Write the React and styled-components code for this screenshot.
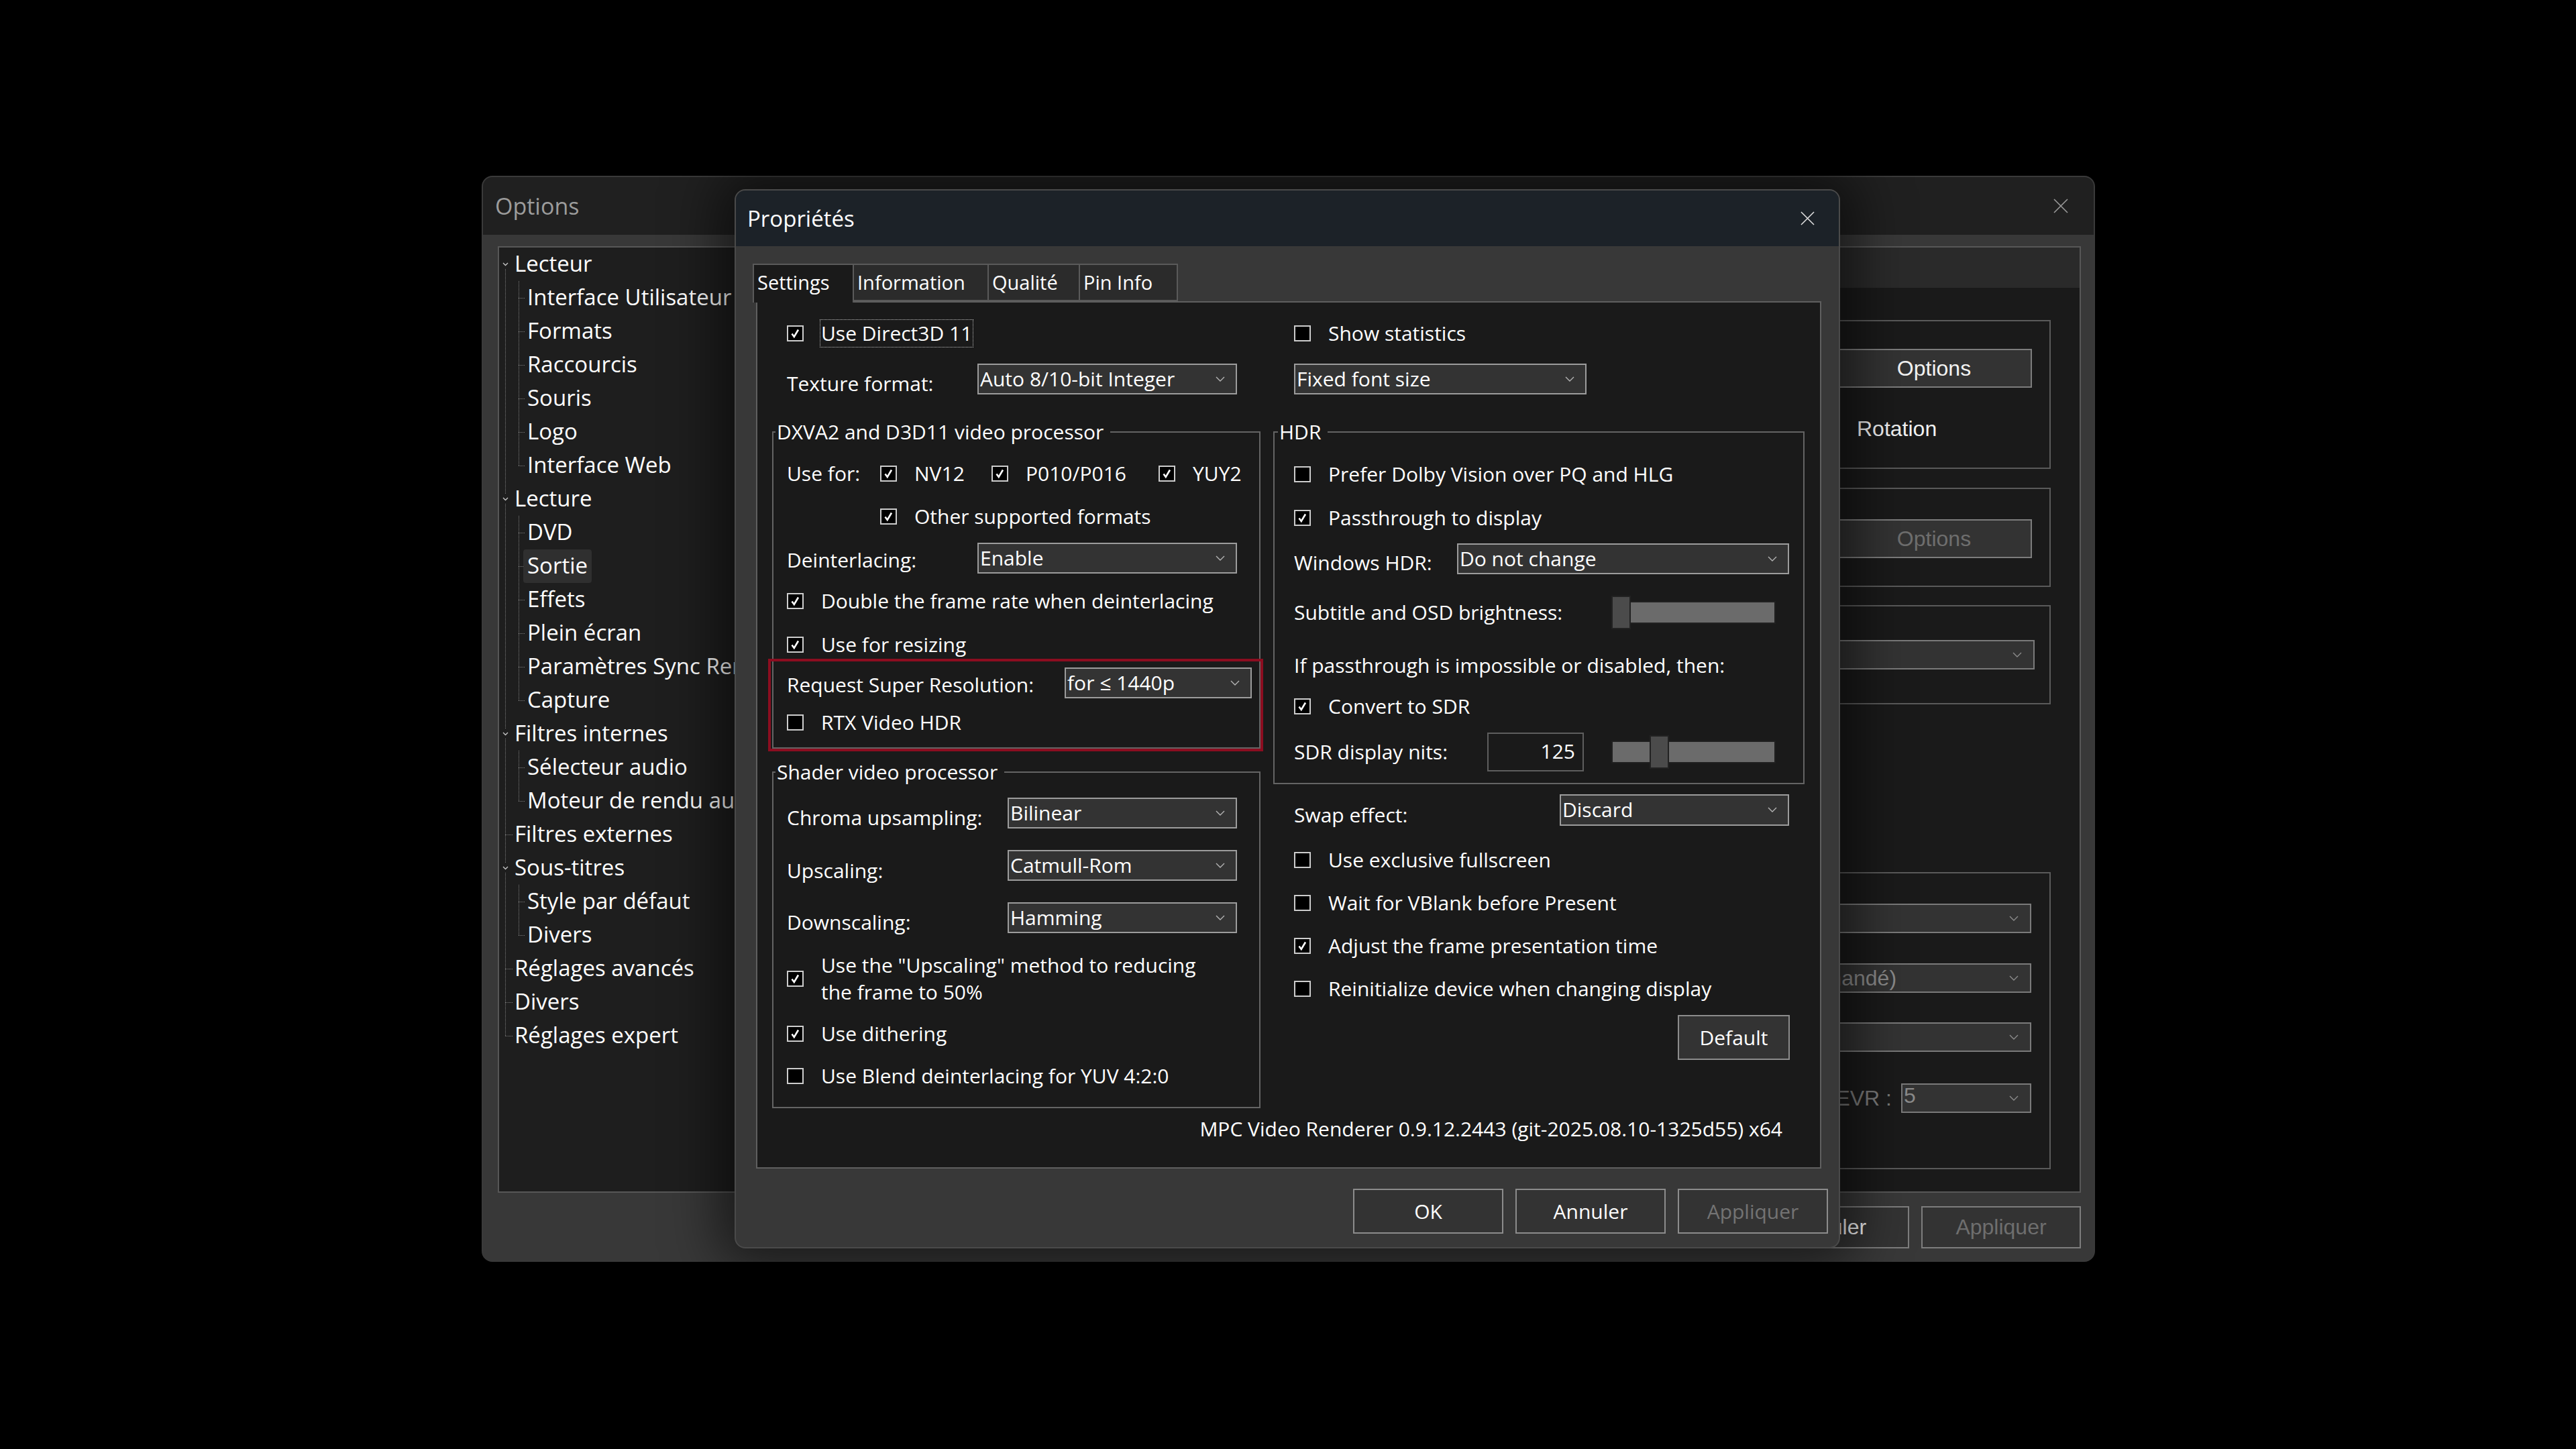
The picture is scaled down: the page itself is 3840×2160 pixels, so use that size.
import React from "react";
import styled, { createGlobalStyle } from "styled-components";

const GlobalStyle = createGlobalStyle`
  html, body {
    margin: 0;
    padding: 0;
    background: #000;
  }
  body {
    font-family: "Open Sans", "Noto Sans", sans-serif;
    color: #fff;
  }
  * {
    box-sizing: border-box;
  }
`;

const Desktop = styled.div`
  position: relative;
  width: 3840px;
  height: 2160px;
  overflow: hidden;
  background: #000;
`;

/* ---------- icons ---------- */

const Chevron = ({ color = "#b4b4b4" }) => (
  <svg width="14" height="8" viewBox="0 0 14 8">
    <path d="M1 1 L7 7 L13 1" fill="none" stroke={color} strokeWidth="1.4" />
  </svg>
);

const CloseIcon = ({ color, size = 22 }) => (
  <svg width={size} height={size} viewBox="0 0 22 22">
    <path d="M1 1 L21 21 M21 1 L1 21" stroke={color} strokeWidth="1.6" fill="none" />
  </svg>
);

const TickIcon = () => (
  <svg width="17" height="16" viewBox="0 0 17 16">
    <path d="M3.5 8.5 L6.8 13 L13 2.5" fill="none" stroke="#fff" strokeWidth="2.6" />
  </svg>
);

/* ---------- back "Options" window ---------- */

const OptionsWindow = styled.div`
  position: absolute;
  left: 718px;
  top: 262px;
  width: 2405px;
  height: 1619px;
  border: 2px solid #3a3a3a;
  border-radius: 16px;
  background: #383838;
  overflow: hidden;
  display: flex;
  flex-direction: column;
`;

const OptionsTitleBar = styled.div`
  flex: none;
  height: 86px;
  background: #202020;
  display: flex;
  align-items: center;
  justify-content: space-between;
  padding: 0 38px 0 18px;
  font-size: 34px;
  color: #9c9c9c;
`;

const OptionsBody = styled.div`
  flex: 1;
  display: flex;
  flex-direction: column;
  padding: 17px 19px 18px 22px;
`;

const MainRow = styled.div`
  display: flex;
  gap: 18px;
  height: 1411px;
  flex: none;
`;

const Tree = styled.div`
  width: 480px;
  flex: none;
  background: #1e1e1e;
  border: 2px solid #575757;
  overflow: hidden;
  font-size: 33px;
`;

const TreeRow = styled.div`
  display: flex;
  align-items: center;
  height: 50px;
  white-space: nowrap;
`;

const dotV = "repeating-linear-gradient(to bottom, #7c7c7c 0 1px, transparent 1px 2px)";
const dotH = "repeating-linear-gradient(to right, #7c7c7c 0 1px, transparent 1px 2px)";

const lineLayers = (kind, stub, w) => {
  const x = 9;
  const layers = [];
  if (kind === "full") layers.push(`${dotV} ${x}px 0 / 1px 100% no-repeat`);
  if (kind === "top") layers.push(`${dotV} ${x}px 0 / 1px 25px no-repeat`);
  if (kind === "bottom") layers.push(`${dotV} ${x}px 32px / 1px 18px no-repeat`);
  if (kind === "split") {
    layers.push(`${dotV} ${x}px 0 / 1px 18px no-repeat`);
    layers.push(`${dotV} ${x}px 32px / 1px 18px no-repeat`);
  }
  if (stub) layers.push(`${dotH} ${x}px 25px / ${w - x}px 1px no-repeat`);
  return layers.length ? layers.join(", ") : "none";
};

const TreeCell = styled.span`
  flex: none;
  width: ${({ $w }) => $w}px;
  height: 50px;
  display: flex;
  align-items: center;
  background: ${({ $kind, $stub, $w }) => lineLayers($kind, $stub, $w)};

  svg {
    margin-left: 5px;
  }
`;

const TreeLabel = styled.span`
  margin-left: -3px;
  padding: 0 6px;
  height: 50px;
  line-height: 48px;
  border-radius: 4px;
  color: #fff;
  background: ${({ $selected }) => ($selected ? "#2f2f2f" : "transparent")};
`;

const treeItems = [
  { label: "Lecteur", level: 0, open: true, first: true },
  { label: "Interface Utilisateur", level: 1 },
  { label: "Formats", level: 1 },
  { label: "Raccourcis", level: 1 },
  { label: "Souris", level: 1 },
  { label: "Logo", level: 1 },
  { label: "Interface Web", level: 1, last: true },
  { label: "Lecture", level: 0, open: true },
  { label: "DVD", level: 1 },
  { label: "Sortie", level: 1, selected: true },
  { label: "Effets", level: 1 },
  { label: "Plein écran", level: 1 },
  { label: "Paramètres Sync Renderer", level: 1 },
  { label: "Capture", level: 1, last: true },
  { label: "Filtres internes", level: 0, open: true },
  { label: "Sélecteur audio", level: 1 },
  { label: "Moteur de rendu audio", level: 1, last: true },
  { label: "Filtres externes", level: 0 },
  { label: "Sous-titres", level: 0, open: true },
  { label: "Style par défaut", level: 1 },
  { label: "Divers", level: 1, last: true },
  { label: "Réglages avancés", level: 0 },
  { label: "Divers", level: 0 },
  { label: "Réglages expert", level: 0, last: true },
];

const TreeChevron = () => (
  <svg width="9" height="6" viewBox="0 0 9 6">
    <path d="M1 1 L4.5 4.5 L8 1" fill="none" stroke="#c8c8c8" strokeWidth="1.3" />
  </svg>
);

function TreeItem({ item }) {
  let rootKind = "full";
  if (item.level === 0) {
    if (item.first) rootKind = "bottom";
    else if (item.open) rootKind = "split";
    else if (item.last) rootKind = "top";
  }
  return (
    <TreeRow>
      <TreeCell $w={20} $kind={rootKind} $stub={item.level === 0 && !item.open}>
        {item.open && <TreeChevron />}
      </TreeCell>
      {item.level === 1 && <TreeCell $w={19} $kind={item.last ? "top" : "full"} $stub />}
      <TreeLabel $selected={item.selected}>{item.label}</TreeLabel>
    </TreeRow>
  );
}

const Page = styled.div`
  flex: 1;
  background: #1a1a1a;
  border: 2px solid #575757;
  display: flex;
  flex-direction: column;
  font-family: "Liberation Sans", Arial, sans-serif;
  font-size: 32px;
`;

const PageHeader = styled.div`
  height: 60px;
  flex: none;
  background: #2a2a2a;
`;

const PageBody = styled.div`
  display: flex;
  flex-direction: column;
  padding: 0 43px 0 30px;
`;

const PageGroup = styled.div`
  flex: none;
  margin-top: ${({ $mt }) => $mt}px;
  height: ${({ $h }) => $h}px;
  border: 2px solid #5a5a5a;
  display: flex;
  flex-direction: column;
  align-items: flex-end;
  padding: ${({ $pt }) => $pt}px ${({ $pr }) => $pr}px 0 0;
`;

const BackButton = styled.div`
  flex: none;
  width: ${({ $w }) => $w}px;
  height: ${({ $h }) => $h || 58}px;
  background: #333333;
  border: 2px solid #7d7d7d;
  display: flex;
  align-items: center;
  justify-content: center;
  font-family: "Liberation Sans", Arial, sans-serif;
  font-size: 32px;
  color: ${({ $disabled }) => ($disabled ? "#6e6e6e" : "#f2f2f2")};
`;

const PlainText = styled.div`
  width: ${({ $w }) => $w}px;
  margin-top: ${({ $mt }) => $mt || 0}px;
  line-height: 56px;
  color: #f2f2f2;
  white-space: nowrap;
`;

const BackComboBox = styled.div`
  flex: none;
  width: ${({ $w }) => $w}px;
  height: 44px;
  margin-top: ${({ $mt }) => $mt || 0}px;
  background: #333333;
  border: 2px solid #7a7a7a;
  display: flex;
  align-items: center;
  justify-content: space-between;
  padding: 0 17px 0 2px;
  color: #8a8a8a;
  white-space: nowrap;
`;

const BackComboText = styled.span`
  margin-left: ${({ $indent }) => $indent || 0}px;
  margin-top: ${({ $raise }) => ($raise ? -8 : 0)}px;
`;

const BackCombo = ({ w, mt, indent, raise, children }) => (
  <BackComboBox $w={w} $mt={mt}>
    <BackComboText $indent={indent} $raise={raise}>{children}</BackComboText>
    <Chevron color="#8c8c8c" />
  </BackComboBox>
);

const BackFieldRow = styled.div`
  display: flex;
  align-items: center;
  gap: 14px;
  margin-top: ${({ $mt }) => $mt}px;
  color: #7a7a7a;
  white-space: nowrap;
`;

const BackButtonRow = styled.div`
  display: flex;
  justify-content: flex-end;
  gap: 18px;
  margin-top: 20px;
`;

function OptionsBack() {
  return (
    <OptionsWindow>
      <OptionsTitleBar>
        <span>Options</span>
        <CloseIcon color="#9a9a9a" />
      </OptionsTitleBar>
      <OptionsBody>
        <MainRow>
          <Tree>
            {treeItems.map((item, i) => (
              <TreeItem key={i} item={item} />
            ))}
          </Tree>
          <Page>
            <PageHeader />
            <PageBody>
              <PageGroup $mt={48} $h={222} $pt={41} $pr={26}>
                <BackButton $w={292}>Options</BackButton>
                <PlainText $w={261} $mt={33}>Rotation</PlainText>
              </PageGroup>
              <PageGroup $mt={28} $h={148} $pt={45} $pr={26}>
                <BackButton $w={292} $disabled>Options</BackButton>
              </PageGroup>
              <PageGroup $mt={27} $h={148} $pt={50} $pr={22}>
                <BackCombo w={600} />
              </PageGroup>
              <PageGroup $mt={250} $h={443} $pt={45} $pr={27}>
                <BackCombo w={580} />
                <BackCombo w={580} mt={45} indent={167}>(recommandé)</BackCombo>
                <BackCombo w={580} mt={44} />
                <BackFieldRow $mt={47}>
                  <span>EVR :</span>
                  <BackCombo w={194} raise>5</BackCombo>
                </BackFieldRow>
              </PageGroup>
            </PageBody>
          </Page>
        </MainRow>
        <BackButtonRow>
          <BackButton $w={238} $h={63}>OK</BackButton>
          <BackButton $w={238} $h={63}>Annuler</BackButton>
          <BackButton $w={238} $h={63} $disabled>Appliquer</BackButton>
        </BackButtonRow>
      </OptionsBody>
    </OptionsWindow>
  );
}

/* ---------- "Propriétés" dialog ---------- */

const Dialog = styled.div`
  position: absolute;
  left: 1095px;
  top: 282px;
  width: 1648px;
  height: 1579px;
  border: 2px solid #4a4a4a;
  border-radius: 16px;
  background: #383838;
  overflow: hidden;
  display: flex;
  flex-direction: column;
  box-shadow: 0 0 80px 24px rgba(0, 0, 0, 0.55);
  color: #fff;
`;

const DialogTitleBar = styled.div`
  flex: none;
  height: 83px;
  background: #1c2228;
  display: flex;
  align-items: center;
  justify-content: space-between;
  padding: 0 36px 0 17px;
  font-size: 33px;
`;

const DialogBody = styled.div`
  flex: 1;
  display: flex;
  flex-direction: column;
  padding: 25px 26px 20px 30px;
`;

const TabStrip = styled.div`
  display: flex;
  align-items: flex-end;
  height: 57px;
  margin-left: -5px;
  flex: none;
`;

const Tab = styled.div`
  position: relative;
  z-index: ${({ $active }) => ($active ? 1 : 0)};
  width: ${({ $w }) => $w}px;
  height: ${({ $active }) => ($active ? 58 : 56)}px;
  margin-left: ${({ $first }) => ($first ? 0 : -2)}px;
  margin-bottom: ${({ $active }) => ($active ? -2 : 0)}px;
  border: 2px solid #5a5a5a;
  border-bottom: ${({ $active }) => ($active ? "none" : "2px solid #5a5a5a")};
  background: ${({ $active }) => ($active ? "#1a1a1a" : "#2b2b2b")};
  padding-left: 5px;
  font-size: 29px;
  line-height: 52px;
  white-space: nowrap;
`;

const Panel = styled.div`
  flex: none;
  height: 1293px;
  border: 2px solid #5f5f5f;
  background: #1a1a1a;
  display: flex;
  flex-direction: column;
  padding: 14px 23px 0 22px;
`;

const Columns = styled.div`
  display: flex;
  gap: 19px;
  align-items: flex-start;
`;

const Column = styled.div`
  width: ${({ $w }) => $w}px;
  flex: none;
  display: flex;
  flex-direction: column;
`;

const Row = styled.div`
  flex: none;
  display: flex;
  align-items: center;
  height: ${({ $h }) => $h}px;
  margin-left: ${({ $indent }) => $indent || 0}px;
  margin-top: ${({ $mt }) => $mt || 0}px;
`;

const Text = styled.span`
  font-size: 30px;
  line-height: 40px;
  white-space: nowrap;
  color: #fff;
`;

const FieldLabel = styled(Text)`
  flex: none;
  width: ${({ $w }) => $w}px;
  padding-top: ${({ $dy }) => ($dy || 0) * 2}px;
`;

const Box = styled.span`
  flex: none;
  width: 25px;
  height: 24px;
  border: 2px solid #cdcdcd;
  background: #000;
  display: flex;
  align-items: center;
  justify-content: center;
`;

const CheckText = styled(Text)`
  margin-left: ${({ $focus }) => ($focus ? 24 : 26)}px;
  padding: ${({ $focus }) => ($focus ? "0 1px" : "0")};
  border: ${({ $focus }) => ($focus ? "1px dotted #bdbdbd" : "none")};
`;

const CheckItem = styled.span`
  flex: none;
  display: flex;
  align-items: center;
  width: ${({ $w }) => ($w ? `${$w}px` : "auto")};
`;

const Check = ({ on, focus, w, children }) => (
  <CheckItem $w={w}>
    <Box>{on && <TickIcon />}</Box>
    <CheckText $focus={focus}>{children}</CheckText>
  </CheckItem>
);

const ComboBox = styled.div`
  flex: none;
  width: ${({ $w }) => $w}px;
  height: ${({ $h }) => $h || 46}px;
  border: 2px solid #9c9c9c;
  background: #333333;
  display: flex;
  align-items: center;
  justify-content: space-between;
  padding: 0 16px 0 2px;
  font-size: 30px;
  line-height: 40px;
  white-space: nowrap;
`;

const Combo = ({ w, h, children }) => (
  <ComboBox $w={w} $h={h}>
    <span>{children}</span>
    <Chevron />
  </ComboBox>
);

const Group = styled.fieldset`
  margin: ${({ $mt }) => $mt}px 0 0 0;
  padding: ${({ $pt }) => $pt}px 0 ${({ $pb }) => $pb}px ${({ $pl }) => $pl}px;
  border: 2px solid #646464;
  min-width: 0;
  display: flex;
  flex-direction: column;
`;

const GroupLegend = styled.legend`
  margin-left: ${({ $ml }) => $ml}px;
  padding: 0 10px 0 2px;
  font-size: 30px;
  line-height: 40px;
  color: #fff;
  white-space: nowrap;
`;

const Highlight = styled.div`
  margin: -10px -6px -10px -28px;
  padding: 6px 2px 6px 24px;
  border: 4px solid #8c0d20;
  display: flex;
  flex-direction: column;
`;

const Track = styled.div`
  position: relative;
  flex: none;
  width: 245px;
  height: 34px;
  background: #6b6b6b;
  border: 2px solid #202020;
`;

const Thumb = styled.div`
  position: absolute;
  top: -10px;
  width: 29px;
  height: 50px;
  background: #4b4b4b;
  border: 2px solid #222;
`;

const Slider = ({ pos }) => (
  <Track>
    <Thumb style={{ left: pos }} />
  </Track>
);

const EditBox = styled.div`
  flex: none;
  width: 144px;
  height: 58px;
  margin-right: 41px;
  border: 2px solid #5e5e5e;
  background: #1a1a1a;
  text-align: right;
  padding-right: 11px;
  font-size: 30px;
  line-height: 52px;
`;

const PushButton = styled.div`
  flex: none;
  width: ${({ $w }) => $w}px;
  height: 67px;
  border: 2px solid #8c8c8c;
  background: #333333;
  display: flex;
  align-items: center;
  justify-content: center;
  font-size: 30px;
  color: ${({ $disabled }) => ($disabled ? "#737373" : "#fff")};
`;

const DefaultRow = styled.div`
  display: flex;
  justify-content: flex-end;
  margin: 7px 22px 0 0;
`;

const Version = styled(Text)`
  display: block;
  margin-top: 8px;
  height: 46px;
  line-height: 46px;
  text-align: right;
  padding-right: 33px;
`;

const DialogButtons = styled.div`
  display: flex;
  justify-content: flex-end;
  gap: 18px;
  margin: 30px -10px 0 0;
`;

function PropertiesDialog() {
  return (
    <Dialog>
      <DialogTitleBar>
        <span>Propriétés</span>
        <CloseIcon color="#e0e0e0" size={21} />
      </DialogTitleBar>
      <DialogBody>
        <TabStrip>
          <Tab $w={151} $active $first>Settings</Tab>
          <Tab $w={203}>Information</Tab>
          <Tab $w={138}>Qualité</Tab>
          <Tab $w={148}>Pin Info</Tab>
        </TabStrip>
        <Panel>
          <Columns>
            <Column $w={728}>
              <Row $h={64} $indent={22}>
                <Check on focus>Use Direct3D 11</Check>
              </Row>
              <Row $h={72} $indent={22}>
                <FieldLabel $w={284} $dy={7}>Texture format:</FieldLabel>
                <Combo w={387}>Auto 8/10-bit Integer</Combo>
              </Row>
              <Group $mt={23} $pt={10} $pb={4} $pl={20}>
                <GroupLegend $ml={-17}>DXVA2 and D3D11 video processor</GroupLegend>
                <Row $h={64}>
                  <FieldLabel $w={139}>Use for:</FieldLabel>
                  <Check on w={166}>NV12</Check>
                  <Check on w={249}>P010/P016</Check>
                  <Check on>YUY2</Check>
                </Row>
                <Row $h={64} $indent={139}>
                  <Check on>Other supported formats</Check>
                </Row>
                <Row $h={60}>
                  <FieldLabel $w={284} $dy={3}>Deinterlacing:</FieldLabel>
                  <Combo w={387}>Enable</Combo>
                </Row>
                <Row $h={68}>
                  <Check on>Double the frame rate when deinterlacing</Check>
                </Row>
                <Row $h={62}>
                  <Check on>Use for resizing</Check>
                </Row>
                <Highlight>
                  <Row $h={52}>
                    <FieldLabel $w={414} $dy={3}>Request Super Resolution:</FieldLabel>
                    <Combo w={279}>for ≤ 1440p</Combo>
                  </Row>
                  <Row $h={66}>
                    <Check>RTX Video HDR</Check>
                  </Row>
                </Highlight>
              </Group>
              <Group $mt={15} $pt={2} $pb={13} $pl={20}>
                <GroupLegend $ml={-17}>Shader video processor</GroupLegend>
                <Row $h={78}>
                  <FieldLabel $w={329} $dy={7}>Chroma upsampling:</FieldLabel>
                  <Combo w={342}>Bilinear</Combo>
                </Row>
                <Row $h={78}>
                  <FieldLabel $w={329} $dy={8}>Upscaling:</FieldLabel>
                  <Combo w={342}>Catmull-Rom</Combo>
                </Row>
                <Row $h={78}>
                  <FieldLabel $w={329} $dy={7}>Downscaling:</FieldLabel>
                  <Combo w={342}>Hamming</Combo>
                </Row>
                <Row $h={104}>
                  <Check on>
                    Use the "Upscaling" method to reducing
                    <br />
                    the frame to 50%
                  </Check>
                </Row>
                <Row $h={60}>
                  <Check on>Use dithering</Check>
                </Row>
                <Row $h={66}>
                  <Check>Use Blend deinterlacing for YUV 4:2:0</Check>
                </Row>
              </Group>
            </Column>

            <Column $w={792}>
              <Row $h={64} $indent={31}>
                <Check>Show statistics</Check>
              </Row>
              <Row $h={72} $indent={31}>
                <Combo w={436}>Fixed font size</Combo>
              </Row>
              <Group $mt={23} $pt={11} $pb={13} $pl={29}>
                <GroupLegend $ml={-24}>HDR</GroupLegend>
                <Row $h={64}>
                  <Check>Prefer Dolby Vision over PQ and HLG</Check>
                </Row>
                <Row $h={66}>
                  <Check on>Passthrough to display</Check>
                </Row>
                <Row $h={55}>
                  <FieldLabel $w={243} $dy={6}>Windows HDR:</FieldLabel>
                  <Combo w={495}>Do not change</Combo>
                </Row>
                <Row $h={106}>
                  <FieldLabel $w={473}>Subtitle and OSD brightness:</FieldLabel>
                  <Slider pos={-2} />
                </Row>
                <Row $h={52}>
                  <Text>If passthrough is impossible or disabled, then:</Text>
                </Row>
                <Row $h={70}>
                  <Check on>Convert to SDR</Check>
                </Row>
                <Row $h={66}>
                  <FieldLabel $w={288} $dy={-4}>SDR display nits:</FieldLabel>
                  <EditBox>125</EditBox>
                  <Slider pos={55} />
                </Row>
              </Group>
              <Row $h={64} $indent={31} $mt={6}>
                <FieldLabel $w={396} $dy={8}>Swap effect:</FieldLabel>
                <Combo w={342} h={47}>Discard</Combo>
              </Row>
              <Row $h={64} $indent={31} $mt={11}>
                <Check>Use exclusive fullscreen</Check>
              </Row>
              <Row $h={64} $indent={31}>
                <Check>Wait for VBlank before Present</Check>
              </Row>
              <Row $h={64} $indent={31}>
                <Check on>Adjust the frame presentation time</Check>
              </Row>
              <Row $h={64} $indent={31}>
                <Check>Reinitialize device when changing display</Check>
              </Row>
              <DefaultRow>
                <PushButton $w={167}>Default</PushButton>
              </DefaultRow>
            </Column>
          </Columns>
          <Version>MPC Video Renderer 0.9.12.2443 (git-2025.08.10-1325d55) x64</Version>
        </Panel>
        <DialogButtons>
          <PushButton $w={224}>OK</PushButton>
          <PushButton $w={224}>Annuler</PushButton>
          <PushButton $w={224} $disabled>Appliquer</PushButton>
        </DialogButtons>
      </DialogBody>
    </Dialog>
  );
}

export default function App() {
  return (
    <>
      <GlobalStyle />
      <Desktop>
        <OptionsBack />
        <PropertiesDialog />
      </Desktop>
    </>
  );
}
